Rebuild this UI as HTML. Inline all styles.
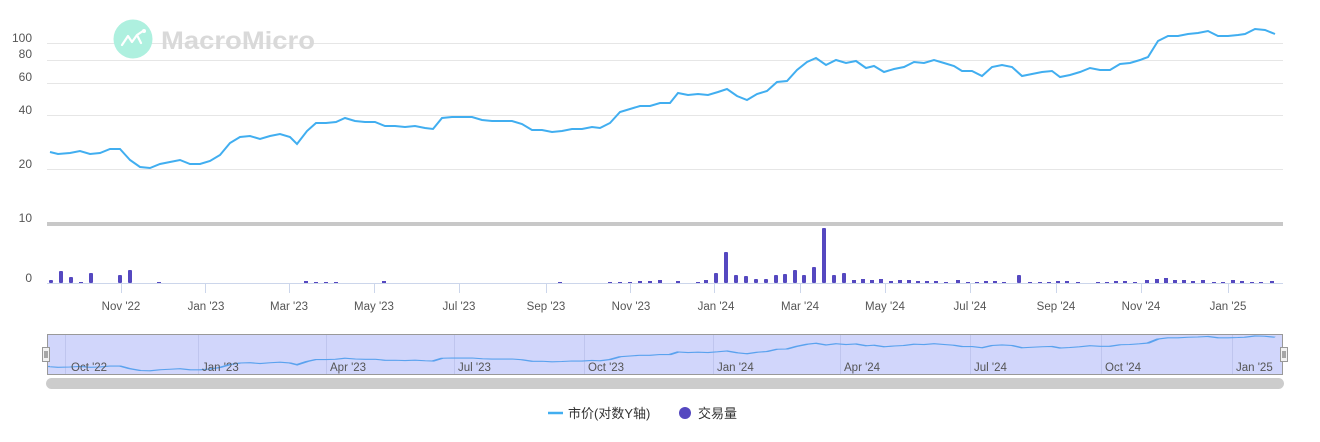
<!DOCTYPE html>
<html><head><meta charset="utf-8"><style>
html,body{margin:0;padding:0;background:#fff;width:1320px;height:442px;overflow:hidden}
svg text{font-family:"Liberation Sans","Noto Sans CJK SC",sans-serif}
</style></head><body>
<svg width="1320" height="442" viewBox="0 0 1320 442" xmlns="http://www.w3.org/2000/svg">
<defs>
<polyline id="ln" fill="none" points="50,152 58,154 70,153 80,151 90,154 100,153 110,149 120,149 130,160 140,167 150,168 160,164 170,162 180,160 190,164 200,164 210,161 220,155 230,143 240,137 250,136 260,139 270,136 280,134 290,137 297,144 307,131 316,123 326,123 336,122 345,118 355,121 365,122 375,122 385,126 395,126 405,127 415,126 425,128 433,129 442,118 452,117 462,117 472,117 482,120 492,121 502,121 512,121 522,124 532,130 542,130 552,132 562,131 572,129 582,129 592,127 600,128 610,123 620,112 630,109 640,106 650,106 660,103 670,103 678,93 688,95 698,94 708,95 718,92 727,89 737,96 747,100 757,94 767,91 777,82 787,81 797,70 807,62 816,58 826,65 836,60 846,63 856,61 866,68 874,66 884,72 894,69 904,67 914,62 924,63 934,60 944,63 954,66 962,71 972,71 982,76 992,67 1002,65 1012,67 1022,76 1032,74 1042,72 1052,71 1060,77 1070,75 1080,72 1090,68 1100,70 1110,70 1120,64 1130,63 1140,60 1148,57 1158,41 1168,36 1178,36 1188,34 1198,33 1208,31 1218,36 1228,36 1238,35 1245,34 1255,29 1265,30 1275,34"/>
</defs>
<g stroke="#e6e6e6" stroke-width="1">
<line x1="47" y1="43.5" x2="1283" y2="43.5"/>
<line x1="47" y1="60.5" x2="1283" y2="60.5"/>
<line x1="47" y1="83.5" x2="1283" y2="83.5"/>
<line x1="47" y1="115.5" x2="1283" y2="115.5"/>
<line x1="47" y1="169.5" x2="1283" y2="169.5"/>
</g>
<rect x="47" y="222" width="1236" height="4" fill="#c8c8c8"/>
<g font-size="12" fill="#555" text-anchor="end">
<text x="32" y="42">100</text><text x="32" y="58">80</text><text x="32" y="81">60</text>
<text x="32" y="114">40</text><text x="32" y="168">20</text><text x="32" y="222">10</text>
<text x="32" y="282">0</text>
</g>
<circle cx="133" cy="39" r="19.5" fill="#aef0df"/>
<path d="M122,45 L128,36 L132,42 L137,35 L141,43 M137,35 L143,31" stroke="#fff" stroke-width="2.2" fill="none" stroke-linecap="round" stroke-linejoin="round"/>
<circle cx="144" cy="31" r="2" fill="#fff"/>
<text x="161" y="49" font-size="25" font-weight="bold" fill="#d9d9d9" textLength="154" lengthAdjust="spacingAndGlyphs">MacroMicro</text>
<use href="#ln" stroke="#41aef0" stroke-width="2"/>
<line x1="47" y1="283.5" x2="1283" y2="283.5" stroke="#ccd6eb"/>
<g fill="#5548c0">
<rect x="49" y="280" width="4" height="3" rx="1"/><rect x="59" y="271" width="4" height="12" rx="1"/><rect x="69" y="277" width="4" height="6" rx="1"/><rect x="79" y="282" width="4" height="1"/><rect x="89" y="273" width="4" height="10" rx="1"/><rect x="118" y="275" width="4" height="8" rx="1"/><rect x="128" y="270" width="4" height="13" rx="1"/><rect x="157" y="282" width="4" height="1"/>
<rect x="304" y="281" width="4" height="2"/><rect x="314" y="282" width="4" height="1"/><rect x="324" y="282" width="4" height="1"/><rect x="334" y="282" width="4" height="1"/><rect x="382" y="281" width="4" height="2"/><rect x="558" y="282" width="4" height="1"/>
<rect x="608" y="282" width="4" height="1"/><rect x="618" y="282" width="4" height="1"/><rect x="628" y="282" width="4" height="1"/><rect x="638" y="281" width="4" height="2"/><rect x="648" y="281" width="4" height="2"/><rect x="658" y="280" width="4" height="3"/><rect x="676" y="281" width="4" height="2"/><rect x="696" y="282" width="4" height="1"/><rect x="704" y="280" width="4" height="3"/>
<rect x="714" y="273" width="4" height="10" rx="1"/><rect x="724" y="252" width="4" height="31" rx="1"/><rect x="734" y="275" width="4" height="8" rx="1"/><rect x="744" y="276" width="4" height="7" rx="1"/><rect x="754" y="279" width="4" height="4" rx="1"/><rect x="764" y="279" width="4" height="4" rx="1"/><rect x="774" y="275" width="4" height="8" rx="1"/><rect x="783" y="274" width="4" height="9" rx="1"/><rect x="793" y="270" width="4" height="13" rx="1"/><rect x="802" y="275" width="4" height="8" rx="1"/><rect x="812" y="267" width="4" height="16" rx="1"/><rect x="822" y="228" width="4" height="55" rx="1"/><rect x="832" y="275" width="4" height="8" rx="1"/><rect x="842" y="273" width="4" height="10" rx="1"/>
<rect x="852" y="280" width="4" height="3"/><rect x="861" y="279" width="4" height="4"/><rect x="870" y="280" width="4" height="3"/><rect x="879" y="279" width="4" height="4"/><rect x="889" y="281" width="4" height="2"/><rect x="898" y="280" width="4" height="3"/><rect x="907" y="280" width="4" height="3"/><rect x="916" y="281" width="4" height="2"/><rect x="925" y="281" width="4" height="2"/><rect x="934" y="281" width="4" height="2"/><rect x="944" y="282" width="4" height="1"/><rect x="956" y="280" width="4" height="3"/><rect x="966" y="282" width="4" height="1"/><rect x="975" y="282" width="4" height="1"/><rect x="984" y="281" width="4" height="2"/><rect x="993" y="281" width="4" height="2"/><rect x="1002" y="282" width="4" height="1"/><rect x="1017" y="275" width="4" height="8" rx="1"/><rect x="1028" y="282" width="4" height="1"/><rect x="1038" y="282" width="4" height="1"/><rect x="1047" y="282" width="4" height="1"/><rect x="1056" y="281" width="4" height="2"/><rect x="1065" y="281" width="4" height="2"/><rect x="1076" y="282" width="4" height="1"/>
<rect x="1096" y="282" width="4" height="1"/><rect x="1105" y="282" width="4" height="1"/><rect x="1114" y="281" width="4" height="2"/><rect x="1123" y="281" width="4" height="2"/><rect x="1133" y="282" width="4" height="1"/><rect x="1145" y="280" width="4" height="3"/><rect x="1155" y="279" width="4" height="4"/><rect x="1164" y="278" width="4" height="5"/><rect x="1173" y="280" width="4" height="3"/><rect x="1182" y="280" width="4" height="3"/><rect x="1191" y="281" width="4" height="2"/><rect x="1201" y="280" width="4" height="3"/><rect x="1212" y="282" width="4" height="1"/><rect x="1221" y="282" width="4" height="1"/><rect x="1231" y="280" width="4" height="3"/><rect x="1240" y="281" width="4" height="2"/><rect x="1250" y="282" width="4" height="1"/><rect x="1259" y="282" width="4" height="1"/><rect x="1270" y="281" width="4" height="2"/>
</g>
<g stroke="#ccd6eb"><line x1="121.5" y1="283" x2="121.5" y2="293"/><line x1="205.5" y1="283" x2="205.5" y2="293"/><line x1="289.5" y1="283" x2="289.5" y2="293"/><line x1="374.5" y1="283" x2="374.5" y2="293"/><line x1="459.5" y1="283" x2="459.5" y2="293"/><line x1="546.5" y1="283" x2="546.5" y2="293"/><line x1="630.5" y1="283" x2="630.5" y2="293"/><line x1="714.5" y1="283" x2="714.5" y2="293"/><line x1="800.5" y1="283" x2="800.5" y2="293"/><line x1="885.5" y1="283" x2="885.5" y2="293"/><line x1="970.5" y1="283" x2="970.5" y2="293"/><line x1="1056.5" y1="283" x2="1056.5" y2="293"/><line x1="1141.5" y1="283" x2="1141.5" y2="293"/><line x1="1228.5" y1="283" x2="1228.5" y2="293"/></g>
<g font-size="11.5" fill="#555" text-anchor="middle">
<text x="121" y="310">Nov '22</text><text x="206" y="310">Jan '23</text><text x="289" y="310">Mar '23</text><text x="374" y="310">May '23</text><text x="459" y="310">Jul '23</text><text x="546" y="310">Sep '23</text><text x="631" y="310">Nov '23</text><text x="716" y="310">Jan '24</text><text x="800" y="310">Mar '24</text><text x="885" y="310">May '24</text><text x="970" y="310">Jul '24</text><text x="1056" y="310">Sep '24</text><text x="1141" y="310">Nov '24</text><text x="1228" y="310">Jan '25</text>
</g>
<rect x="47" y="334" width="1236" height="40" fill="#d1d6fb"/>
<g stroke="#bfc5ee"><line x1="65.5" y1="334" x2="65.5" y2="374"/><line x1="198.5" y1="334" x2="198.5" y2="374"/><line x1="326.5" y1="334" x2="326.5" y2="374"/><line x1="454.5" y1="334" x2="454.5" y2="374"/><line x1="584.5" y1="334" x2="584.5" y2="374"/><line x1="713.5" y1="334" x2="713.5" y2="374"/><line x1="840.5" y1="334" x2="840.5" y2="374"/><line x1="970.5" y1="334" x2="970.5" y2="374"/><line x1="1101.5" y1="334" x2="1101.5" y2="374"/><line x1="1232.5" y1="334" x2="1232.5" y2="374"/></g>
<g transform="translate(0,328.75) scale(1,0.25)"><use href="#ln" stroke="#5aa2ee" stroke-width="4.5"/></g>
<polyline points="47,366.5 50,366.5" stroke="#5aa2ee" stroke-width="1.2"/>
<rect x="47.5" y="334.5" width="1235" height="40" fill="none" stroke="#999"/>
<g font-size="11.5" fill="#555">
<text x="71" y="371">Oct '22</text><text x="202" y="371">Jan '23</text><text x="330" y="371">Apr '23</text><text x="458" y="371">Jul '23</text><text x="588" y="371">Oct '23</text><text x="717" y="371">Jan '24</text><text x="844" y="371">Apr '24</text><text x="974" y="371">Jul '24</text><text x="1105" y="371">Oct '24</text><text x="1236" y="371">Jan '25</text>
</g>
<rect x="42.5" y="347.5" width="7" height="14" fill="#f2f2f2" stroke="#999"/><path d="M45,351v7M47,351v7" stroke="#333" stroke-width="0.8"/>
<rect x="1280.5" y="347.5" width="7" height="14" fill="#f2f2f2" stroke="#999"/><path d="M1283,351v7M1285,351v7" stroke="#333" stroke-width="0.8"/>
<rect x="46" y="378" width="1238" height="11" rx="5.5" fill="#cccccc"/>
<line x1="548" y1="413" x2="563" y2="413" stroke="#41aef0" stroke-width="2.5"/>
<text x="568" y="418" font-size="13" fill="#333">市价(对数Y轴)</text>
<circle cx="685" cy="413" r="6" fill="#5548c0"/>
<text x="698" y="418" font-size="13" fill="#333">交易量</text>
</svg>
</body></html>
